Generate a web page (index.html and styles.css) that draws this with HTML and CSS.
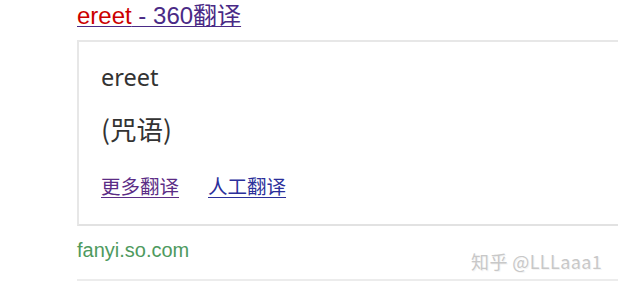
FILE: index.html
```html
<!DOCTYPE html>
<html>
<head>
<meta charset="utf-8">
<link rel="stylesheet" href="styles.css">
</head>
<body>
<div class="result">
  <h3 class="title"><a class="t-link" href="#"><span class="t-hit">ereet</span> - 360翻译</a></h3>
  <div class="card">
    <div class="word">ereet</div>
    <div class="meaning">(咒语)</div>
    <div class="links">
      <a class="more" href="#">更多翻译</a>
      <a class="human" href="#">人工翻译</a>
    </div>
  </div>
  <div class="url">fanyi.so.com</div>
  <div class="sep"></div>
</div>
<div class="watermark">知乎 @LLLaaa1</div>
</body>
</html>
```
FILE: styles.css
```css
html, body {
  margin: 0;
  padding: 0;
  background: #fff;
  overflow: hidden;
}
body {
  width: 618px;
  height: 286px;
  position: relative;
  font-family: "Liberation Sans", Arial, "Noto Sans CJK SC", sans-serif;
}
.result {
  padding-left: 77px;
}
.title {
  margin: 0;
  font-weight: normal;
  font-size: 24px;
  line-height: 32px;
  height: 40px;
}
.t-link {
  color: #4a2a86;
  text-decoration: underline;
  text-decoration-thickness: 1px;
  text-underline-offset: 2px;
}
.t-hit {
  color: #c00;
}
.card {
  width: 519px;
  height: 182px;
  border: 2px solid #e7e7e7;
  border-right: none;
  border-bottom-color: #e2e2e2;
  padding-left: 22px;
  color: #333;
  font-family: "Noto Sans", "Noto Sans CJK SC", sans-serif;
}
.word {
  font-size: 23.5px;
  line-height: 30px;
  margin-top: 20px;
}
.meaning {
  font-size: 26.5px;
  line-height: 36px;
  margin-top: 19px;
  font-family: "Noto Sans CJK SC", sans-serif;
}
.links {
  display: flex;
  gap: 29px;
  margin-top: 25px;
  font-family: "Noto Sans CJK SC", sans-serif;
  font-size: 19.5px;
  line-height: 28px;
}
.links a {
  text-decoration: underline;
  text-decoration-thickness: 1px;
  text-underline-offset: 3px;
}
.more {
  color: #5b2c86;
}
.human {
  color: #2b2f9a;
}
.url {
  color: #4e9a5e;
  font-size: 20px;
  line-height: 24px;
  margin-top: 12px;
}
.sep {
  height: 2px;
  background: #ececec;
  margin-top: 17px;
  width: 541px;
}
.watermark {
  position: absolute;
  left: 471px;
  top: 248px;
  font-family: "Noto Sans CJK SC", sans-serif;
  font-size: 18px;
  color: #c8c8c8;
  text-shadow: 1px 1px 0 #f4f4f4;
  letter-spacing: 0.4px;
}
```
